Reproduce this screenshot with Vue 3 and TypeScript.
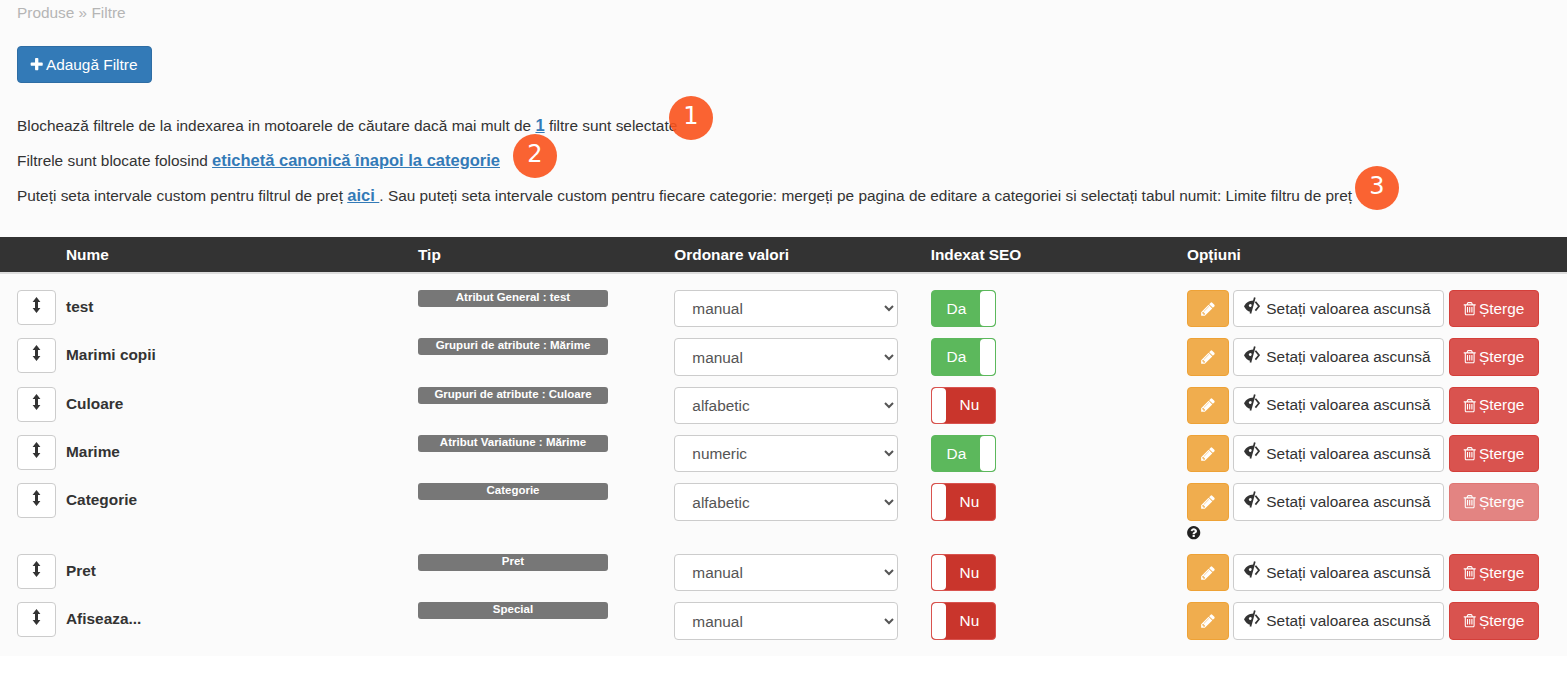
<script setup lang="ts">
import { ref } from 'vue'

const icons: Record<string, string> = {
  plus: 'M1600 736v192q0 40-28 68t-68 28h-416v416q0 40-28 68t-68 28h-192q-40 0-68-28t-28-68v-416h-416q-40 0-68-28t-28-68v-192q0-40 28-68t68-28h416v-416q0-40 28-68t68-28h192q40 0 68 28t28 68v416h416q40 0 68 28t28 68z',
  pencil: 'M491 1536l91-91-235-235-91 91v107h128v128h107zm523-928q0-22-22-22-10 0-17 7l-542 542q-7 7-7 17 0 22 22 22 10 0 17-7l542-542q7-7 7-17zm-54-192l416 416-832 832h-416v-416zm683 96q0 53-37 90l-166 166-416-416 166-165q36-38 90-38 53 0 91 38l235 234q37 39 37 91z',
  trash: 'M704 736v576q0 14-9 23t-23 9h-64q-14 0-23-9t-9-23v-576q0-14 9-23t23-9h64q14 0 23 9t9 23zm256 0v576q0 14-9 23t-23 9h-64q-14 0-23-9t-9-23v-576q0-14 9-23t23-9h64q14 0 23 9t9 23zm256 0v576q0 14-9 23t-23 9h-64q-14 0-23-9t-9-23v-576q0-14 9-23t23-9h64q14 0 23 9t9 23zm128 724v-948h-896v948q0 22 7 40.500t14.500 27 10.500 8.500h832q3 0 10.500-8.500t14.500-27 7-40.500zm-672-1076h448l-48-117q-7-9-17-11h-317q-10 2-17 11zm928 32v64q0 14-9 23t-23 9h-96v948q0 83-47 143.500t-113 60.500h-832q-66 0-113-58.500t-47-141.500v-952h-96q-14 0-23-9t-9-23v-64q0-14 9-23t23-9h309l70-167q15-37 54-63t79-26h320q40 0 79 26t54 63l70 167h309q14 0 23 9t9 23z',
  question: 'M1024 1376v-192q0-14-9-23t-23-9h-192q-14 0-23 9t-9 23v192q0 14 9 23t23 9h192q14 0 23-9t9-23zm256-672q0-88-55.500-163t-138.500-116-170-41q-243 0-371 213-15 24 8 42l132 100q7 6 19 6 16 0 25-12 53-68 86-92 34-24 86-24 48 0 85.500 26t37.500 59q0 38-20 61t-68 45q-63 28-115.500 86.500t-52.500 125.500v36q0 14 9 23t23 9h192q14 0 23-9t9-23q0-19 21.500-49.500t54.500-49.500q32-18 49-28.500t46-35 44.500-48 28-60.500 12.500-81zm384 192q0 209-103 385.500t-279.500 279.500-385.500 103-385.500-103-279.500-279.500-103-385.500 103-385.500 279.500-279.500 385.500-103 385.500 103 279.500 279.500 103 385.500z',
}

interface Filter {
  name: string
  type: string
  order: string
  seo: boolean
  locked?: boolean
}

const filters = ref<Filter[]>([
  { name: 'test', type: 'Atribut General : test', order: 'manual', seo: true },
  { name: 'Marimi copii', type: 'Grupuri de atribute : Mărime', order: 'manual', seo: true },
  { name: 'Culoare', type: 'Grupuri de atribute : Culoare', order: 'alfabetic', seo: false },
  { name: 'Marime', type: 'Atribut Variatiune : Mărime', order: 'numeric', seo: true },
  { name: 'Categorie', type: 'Categorie', order: 'alfabetic', seo: false, locked: true },
  { name: 'Pret', type: 'Pret', order: 'manual', seo: false },
  { name: 'Afiseaza...', type: 'Special', order: 'manual', seo: false },
])
const orders = ['manual', 'alfabetic', 'numeric']
</script>

<template>
  <div class="page">
    <div class="crumb">Produse » Filtre</div>
    <button class="btn add">
      <svg class="ico ico-plus" viewBox="0 0 1792 1792"><path :d="icons.plus" /></svg>
      Adaugă Filtre
    </button>
    <div class="notes">
      <p>Blochează filtrele de la indexarea in motoarele de căutare dacă mai mult de <a class="link">1</a> filtre sunt selectate</p>
      <p>Filtrele sunt blocate folosind <a class="link">etichetă canonică înapoi la categorie</a></p>
      <p>Puteți seta intervale custom pentru filtrul de preț <a class="link">aici </a>. Sau puteți seta intervale custom pentru fiecare categorie: mergeți pe pagina de editare a categoriei si selectați tabul numit: Limite filtru de preț</p>
      <span class="marker m1">1</span>
      <span class="marker m2">2</span>
      <span class="marker m3">3</span>
    </div>

    <div class="cols head">
      <span></span>
      <span>Nume</span>
      <span>Tip</span>
      <span>Ordonare valori</span>
      <span>Indexat SEO</span>
      <span>Opțiuni</span>
    </div>

    <div class="body">
      <div v-for="f in filters" :key="f.name" class="cols row" :class="{ tall: f.locked }">
        <button class="handle" aria-label="Mută">
          <svg class="ico ico-arrows" viewBox="0 0 9 16"><path d="M4.5 0 8.4 5H6V11H8.4L4.5 16 .6 11H3V5H.6Z" /></svg>
        </button>
        <div class="name">{{ f.name }}</div>
        <div class="label">{{ f.type }}</div>
        <select class="select" :value="f.order">
          <option v-for="o in orders" :key="o" :value="o">{{ o }}</option>
        </select>
        <div class="toggle" :class="f.seo ? 'on' : 'off'">
          <span class="knob"></span>
          <span class="toggle-text">{{ f.seo ? 'Da' : 'Nu' }}</span>
        </div>
        <div class="options">
          <div class="actions">
            <button class="btn edit" aria-label="Editează">
              <svg class="ico ico-pencil" viewBox="0 0 1792 1792"><path :d="icons.pencil" /></svg>
            </button>
            <button class="btn hide">
              <svg class="ico ico-eye" viewBox="0 0 16 17">
                <path d="M0 9.2C1.6 6 4.6 3.6 9.6 3.4L10 3.6 6.6 15C3.4 14.4 1.4 12 0 9.2Z" />
                <circle class="pupil" cx="6.4" cy="8.6" r="1.5" />
                <path class="stroke" d="M10.8 .6 6.4 16.4" />
                <path class="stroke" d="M11.4 4.8 15 9.2 11.4 13.6" />
              </svg>
              Setați valoarea ascunsă
            </button>
            <button class="btn del" :class="{ disabled: f.locked }">
              <svg class="ico ico-trash" viewBox="0 0 1792 1792"><path :d="icons.trash" /></svg>
              Șterge
            </button>
          </div>
          <svg v-if="f.locked" class="ico ico-help" viewBox="0 0 1792 1792"><path :d="icons.question" /></svg>
        </div>
      </div>
    </div>
  </div>
</template>

<style scoped>
.page {
  height: 656px;
  background: #fbfbfb;
  font-family: "Liberation Sans", Arial, sans-serif;
  font-size: 15.4px;
  line-height: 1.42857;
  color: #333;
  overflow: hidden;
}
.crumb {
  height: 46px;
  padding: 2px 17px 0;
  box-sizing: border-box;
  color: #b5b5b5;
}
.btn {
  display: inline-flex;
  align-items: center;
  justify-content: center;
  box-sizing: border-box;
  height: 37.43px;
  padding: 0;
  border: 1px solid transparent;
  border-radius: 4px;
  font: inherit;
  cursor: pointer;
}
.ico {
  display: block;
  fill: currentColor;
  flex: none;
}
.add {
  display: flex;
  width: 135px;
  height: 37px;
  margin-left: 17px;
  gap: 2px;
  color: #fff;
  background: #337ab7;
  border-color: #2e6da4;
}
.ico-plus {
  width: 15.4px;
  height: 15.4px;
  margin-left: -3px;
}
.notes {
  position: relative;
  height: 154px;
  padding: 25px 17px 0;
  box-sizing: border-box;
}
.notes p {
  margin: 0;
  height: 35px;
  line-height: 35px;
  white-space: nowrap;
}
.link {
  color: #337ab7;
  font-weight: 700;
  font-size: 16.5px;
  text-decoration: underline;
}
.marker {
  position: absolute;
  width: 44px;
  height: 44px;
  border-radius: 50%;
  background: rgba(249, 82, 28, 0.9);
  color: #fff;
  font-family: "DejaVu Sans", sans-serif;
  font-size: 24px;
  line-height: 41px;
  text-align: center;
}
.m1 { left: 669px; top: 13px; }
.m2 { left: 513px; top: 51px; }
.m3 { left: 1355px; top: 83px; }

.cols {
  display: grid;
  grid-template-columns: 49px 352px 256.33px 256.33px 256.33px 1fr;
  padding-left: 17px;
}
.head {
  height: 37px;
  box-sizing: border-box;
  align-items: center;
  background: #333;
  color: #fff;
  font-weight: 700;
  padding-bottom: 2px;
  border-bottom: 2px solid #ddd;
  line-height: 35px;
}
.body {
  padding-top: 16px;
}
.row {
  height: 48.33px;
  align-items: start;
}
.row.tall {
  height: 70.7px;
}
.handle {
  width: 39px;
  height: 35px;
  box-sizing: border-box;
  padding: 0;
  display: flex;
  justify-content: center;
  padding-top: 6px;
  background: #fff;
  border: 1px solid #ccc;
  border-radius: 4px;
  color: #333;
}
.ico-arrows {
  width: 9px;
  height: 16px;
}
.name {
  font-weight: 700;
  line-height: 33px;
}
.label {
  width: 190px;
  height: 17px;
  border-radius: 3px;
  background: #777;
  color: #fff;
  font-size: 11.5px;
  font-weight: 700;
  line-height: 14px;
  text-align: center;
}
.select {
  width: 224px;
  height: 37.43px;
  box-sizing: border-box;
  padding: 0 13px;
  background: #fff;
  border: 1px solid #ccc;
  border-radius: 4px;
  color: #555;
  font: inherit;
}
.toggle {
  display: flex;
  width: 65px;
  height: 37.43px;
  box-sizing: border-box;
  align-items: center;
  border: 1px solid;
  border-radius: 4px;
  overflow: hidden;
  color: #fff;
}
.toggle-text {
  flex: 1;
  text-align: center;
}
.knob {
  width: 14.5px;
  align-self: stretch;
  background: #fff;
  border-radius: 4px;
}
.toggle.on {
  flex-direction: row-reverse;
  background: #5cb85c;
  border-color: #5cb85c;
}
.toggle.on .toggle-text {
  padding-left: 1px;
}
.toggle.off {
  background: #c9352c;
  border-color: #d9534f;
}
.toggle.off .toggle-text {
  padding-right: 2px;
}
.actions {
  display: flex;
}
.edit {
  width: 42px;
  margin-right: 4px;
  color: #fff;
  background: #f0ad4e;
  border-color: #eea236;
}
.ico-pencil {
  width: 16px;
  height: 16px;
}
.hide {
  width: 211px;
  margin-right: 5px;
  gap: 6px;
  background: #fff;
  border-color: #ccc;
  color: #333;
}
.ico-eye {
  width: 16px;
  height: 17px;
  margin: -6px 0 0 -2px;
}
.pupil {
  fill: #fff;
}
.stroke {
  fill: none;
  stroke: currentColor;
  stroke-width: 1.7;
}
.del {
  width: 90px;
  gap: 2px;
  color: #fff;
  background: #d9534f;
  border-color: #d43f3a;
}
.del.disabled {
  opacity: 0.7;
}
.ico-trash {
  width: 15.4px;
  height: 15.4px;
  margin-left: -2px;
}
.ico-help {
  width: 15.4px;
  height: 15.4px;
  margin: 4px 0 0 -1px;
  color: #222;
}
</style>

<style>
html, body {
  background: #fff;
}
</style>
